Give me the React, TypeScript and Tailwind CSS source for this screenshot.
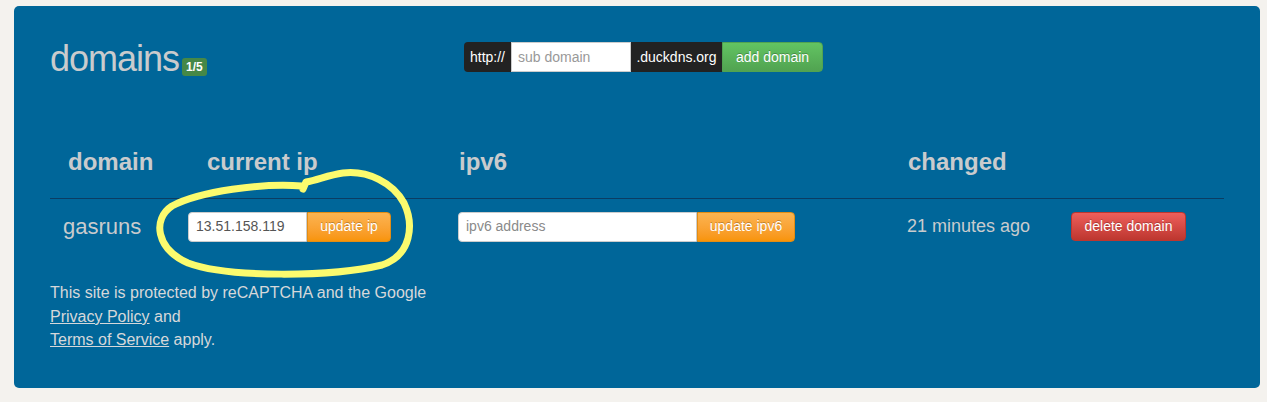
import React from 'react';

export default function App() {
  return (
    <div className="relative w-[1267px] h-[402px] bg-[#f4f2ee] pt-[6px] pl-[14px] font-['Liberation_Sans',Arial,sans-serif]">
      <div className="w-[1246px] h-[382px] rounded-[5px] bg-[#006699] pl-[36px]">
        {/* title + add form */}
        <div className="flex items-start h-[142px] pt-[35px]">
          <div className="w-[414px] flex items-baseline">
            <h1 className="text-[36px] leading-[36px] tracking-[-1px] text-[#c9cbcd]">domains</h1>
            <span className="ml-[3px] rounded-[3px] bg-[#468847] px-[4px] py-[2px] text-[12px] leading-[14px] font-bold text-white">
              1/5
            </span>
          </div>
          <div className="mt-[1px] flex h-[30px] text-[14px]">
            <div className="flex w-[47px] items-center justify-center rounded-l-[4px] bg-[#222] text-white">http://</div>
            <input
              className="w-[120px] border border-[#ccc] bg-white px-[6px] text-[14px] text-[#555] outline-none placeholder:text-[#999]"
              placeholder="sub domain"
            />
            <div className="flex w-[91px] items-center justify-center bg-[#222] text-white">.duckdns.org</div>
            <button className="w-[101px] rounded-r-[4px] border border-[#51a351] bg-gradient-to-b from-[#62c462] to-[#51a351] text-white [text-shadow:0_-1px_0_rgba(0,0,0,0.25)]">
              add domain
            </button>
          </div>
        </div>

        {/* table */}
        <div className="w-[1174px]">
          <div className="grid grid-cols-[138px_270px_449px_164px_153px] border-b border-[#0b3d63] pb-[22px] text-[24px] leading-[28px] font-bold text-[#c9cbcd]">
            <div className="pl-[18px]">domain</div>
            <div className="pl-[19px]">current ip</div>
            <div className="pl-[1px]">ipv6</div>
            <div className="pl-[1px]">changed</div>
            <div />
          </div>
          <div className="grid grid-cols-[138px_270px_449px_164px_153px] items-center pt-[11px]">
            <div className="pl-[13px] text-[22px] text-[#c9cbcd]">gasruns</div>
            <div className="flex h-[30px] text-[14px]">
              <input
                className="w-[119px] rounded-l-[4px] border border-[#ccc] bg-white px-[7px] text-[14px] text-[#555] outline-none"
                defaultValue="13.51.158.119"
              />
              <button className="w-[84px] rounded-r-[4px] border border-[#e38d13] bg-gradient-to-b from-[#fbb450] to-[#f89406] text-white [text-shadow:0_-1px_0_rgba(0,0,0,0.25)]">
                update ip
              </button>
            </div>
            <div className="flex h-[30px] text-[14px]">
              <input
                className="w-[239px] rounded-l-[4px] border border-[#ccc] bg-white px-[7px] text-[14px] text-[#555] outline-none placeholder:text-[#8a8a8a]"
                placeholder="ipv6 address"
              />
              <button className="w-[98px] rounded-r-[4px] border border-[#e38d13] bg-gradient-to-b from-[#fbb450] to-[#f89406] text-white [text-shadow:0_-1px_0_rgba(0,0,0,0.25)]">
                update ipv6
              </button>
            </div>
            <div className="text-[18px] text-[#c9cbcd]">21 minutes ago</div>
            <div>
              <button className="h-[29px] w-[115px] rounded-[4px] border border-[#bd362f] bg-gradient-to-b from-[#ee5f5b] to-[#bd362f] text-[14px] text-white [text-shadow:0_-1px_0_rgba(0,0,0,0.25)]">
                delete domain
              </button>
            </div>
          </div>
        </div>

        {/* recaptcha notice */}
        <div className="mt-[38px] text-[16px] leading-[23.5px] text-[#d6d8da]">
          <p>This site is protected by reCAPTCHA and the Google</p>
          <p>
            <a className="underline" href="#">Privacy Policy</a> and
          </p>
          <p>
            <a className="underline" href="#">Terms of Service</a> apply.
          </p>
        </div>
      </div>

      {/* hand-drawn highlight */}
      <svg className="pointer-events-none absolute left-0 top-0" width="1267" height="402" viewBox="0 0 1267 402">
        <path
          d="M 302 186 C 262 183, 200 191, 172 206 C 152 219, 156 249, 188 263 C 228 278, 332 277, 382 265 C 412 255, 414 224, 404 203 C 393 183, 368 170, 343 173 C 328 175, 318 180, 306 182 L 303 189"
          fill="none"
          stroke="#fbfb6e"
          strokeWidth="7"
          strokeLinecap="round"
          strokeLinejoin="round"
        />
      </svg>
    </div>
  );
}
